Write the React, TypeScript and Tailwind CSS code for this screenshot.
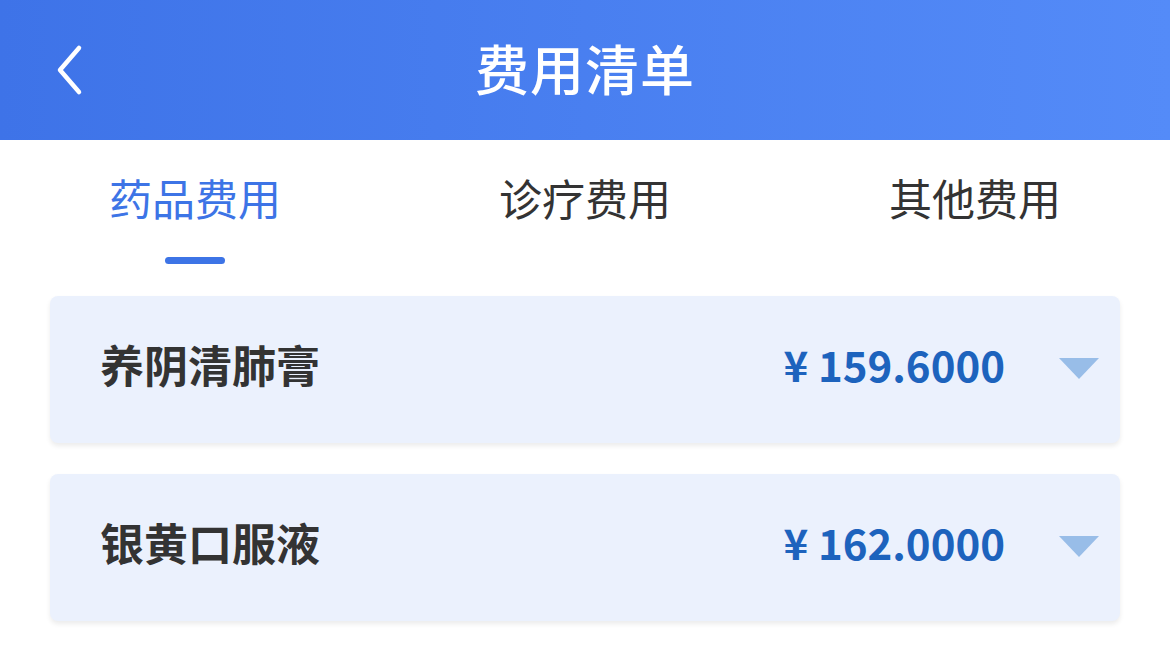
import React, { useState } from 'react';

const font = { fontFamily: '"Noto Sans CJK SC", "Noto Sans", sans-serif' };

const tabs = ['药品费用', '诊疗费用', '其他费用'];

const items = [
  { name: '养阴清肺膏', price: '159.6000' },
  { name: '银黄口服液', price: '162.0000' },
];

const App: React.FC = () => {
  const [active, setActive] = useState(0);

  return (
    <div className="w-[1170px] h-[668px] bg-white overflow-hidden" style={font}>
      {/* header */}
      <div className="relative h-[140px] bg-gradient-to-r from-[#3e73e8] to-[#548bf8] flex items-center justify-center pb-[5px]">
        <button className="absolute left-[50px] top-[40px] w-[40px] h-[60px] flex items-center justify-center">
          <svg width="30" height="54" viewBox="0 0 30 54" fill="none">
            <path d="M24 5 L5 27 L24 49" stroke="white" strokeWidth="4.5" strokeLinecap="round" strokeLinejoin="round" />
          </svg>
        </button>
        <h1 className="text-white text-[54px] font-medium leading-none tracking-[1px]">费用清单</h1>
      </div>

      {/* tabs */}
      <div className="flex">
        {tabs.map((t, i) => (
          <div key={t} className="flex-1 flex flex-col items-center pt-[27px] cursor-pointer" onClick={() => setActive(i)}>
            <span className={`text-[43px] leading-[60px] ${i === active ? 'text-[#3d74e6]' : 'text-[#333333]'}`}>{t}</span>
            <div className={`mt-[30px] w-[60px] h-[7px] rounded-full ${i === active ? 'bg-[#3d74e6]' : 'bg-transparent'}`} />
          </div>
        ))}
      </div>

      {/* list */}
      <div className="px-[50px] pt-[32px] flex flex-col gap-[31px]">
        {items.map(it => (
          <div
            key={it.name}
            className="h-[147px] rounded-[8px] bg-[#ebf1fd] shadow-[0_3px_5px_rgba(0,0,0,0.08)] flex items-center pl-[50px] pr-[21px]"
          >
            <span className="text-[44px] font-bold text-[#333333] leading-none -mt-[12px]">{it.name}</span>
            <span className="ml-auto text-[42px] font-bold text-[#1d63bd] leading-none -mt-[12px]">¥ {it.price}</span>
            <svg className="ml-[54px] -mt-[2px]" width="40" height="21" viewBox="0 0 40 21">
              <path d="M0 0 H40 L20 21 Z" fill="#98bde8" />
            </svg>
          </div>
        ))}
      </div>
    </div>
  );
};

export default App;
